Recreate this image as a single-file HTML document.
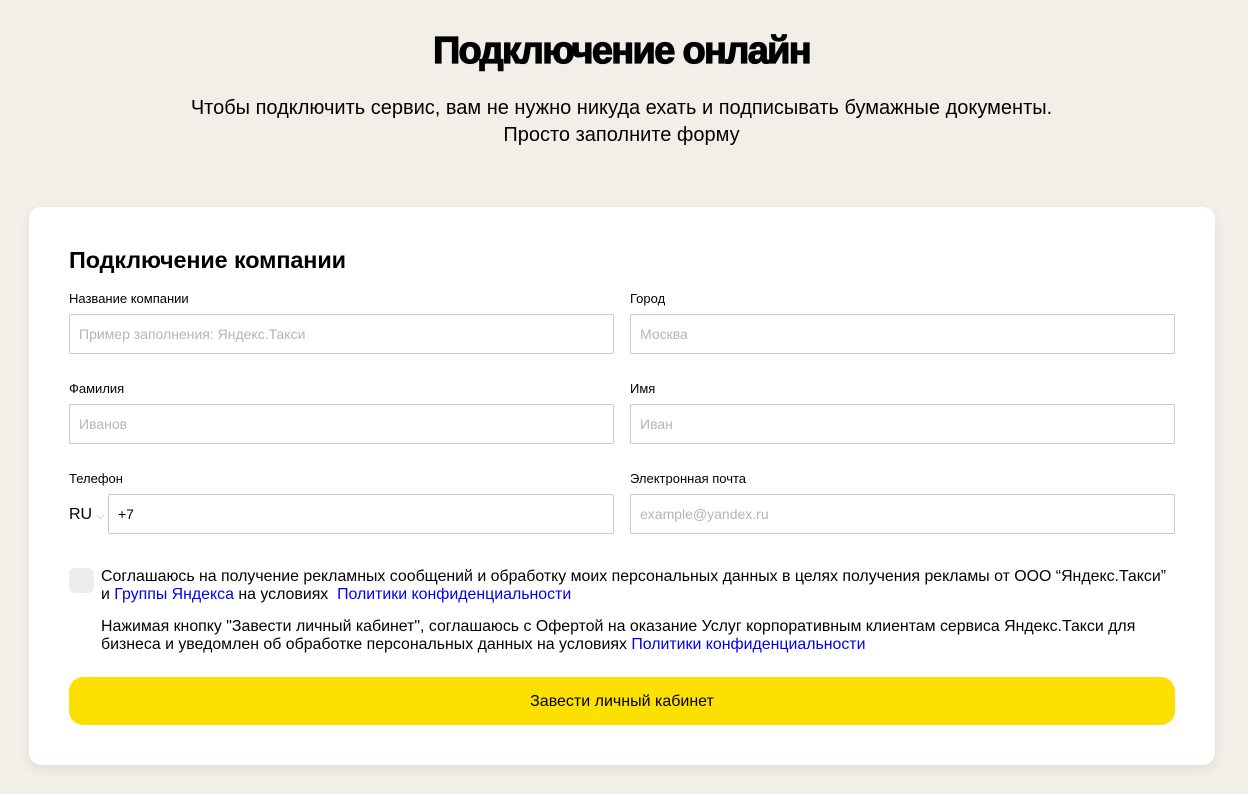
<!DOCTYPE html>
<html><head><meta charset="utf-8"><style>
*{box-sizing:border-box;margin:0;padding:0}
body{width:1248px;height:794px;background:#f2efe8;font-family:"Liberation Sans",sans-serif;color:#000;position:relative;overflow:hidden}
h1{position:absolute;top:30px;left:0;width:1243px;text-align:center;font-size:38px;font-weight:bold;letter-spacing:-1.7px;-webkit-text-stroke:1.2px #000}
.sub{position:absolute;top:95px;left:0;width:1243px;text-align:center;font-size:20px;line-height:27px}
.card{position:absolute;left:29px;top:207px;width:1186px;height:558px;background:#fff;border-radius:12px;box-shadow:0 4px 12px rgba(0,0,0,.08)}
.t{position:absolute;left:40px;top:40px;font-size:23.4px;font-weight:bold;letter-spacing:-0.1px}
.l{position:absolute;font-size:13px}
.i{position:absolute;height:40px;width:545px;border:1px solid #c9c9c9;border-radius:2px;font-size:14px;color:#b5b5b5;padding:11px 9px}
.cb{position:absolute;left:40px;top:361px;width:25px;height:25px;background:#eeedeb;border-radius:6px}
.p{position:absolute;left:72px;font-size:15.9px;line-height:18px}
a{color:#0000ee;text-decoration:none}
.btn{position:absolute;left:40px;top:470px;width:1106px;height:48px;background:#fce000;border-radius:14px;text-align:center;line-height:50px;font-size:16px}
</style></head><body>
<h1>Подключение онлайн</h1>
<div class="sub">Чтобы подключить сервис, вам не нужно никуда ехать и подписывать бумажные документы.<br>Просто заполните форму</div>
<div class="card">
<div class="t">Подключение компании</div>
<div class="l" style="left:40px;top:84px">Название компании</div>
<div class="l" style="left:601px;top:84px">Город</div>
<div class="i" style="left:40px;top:107px">Пример заполнения: Яндекс.Такси</div>
<div class="i" style="left:601px;top:107px">Москва</div>
<div class="l" style="left:40px;top:174px">Фамилия</div>
<div class="l" style="left:601px;top:174px">Имя</div>
<div class="i" style="left:40px;top:197px">Иванов</div>
<div class="i" style="left:601px;top:197px">Иван</div>
<div class="l" style="left:40px;top:264px">Телефон</div>
<div class="l" style="left:601px;top:264px">Электронная почта</div>
<div style="position:absolute;left:40px;top:299px;font-size:16px">RU <span style="font-size:10px;color:#aaa">⌵</span></div>
<div class="i" style="left:79px;top:287px;width:506px;color:#000">+7</div>
<div class="i" style="left:601px;top:287px">example@yandex.ru</div>
<div class="cb"></div>
<div class="p" style="top:361px;width:1100px">Соглашаюсь на получение рекламных сообщений и обработку моих персональных данных в целях получения рекламы от ООО “Яндекс.Такси”<br>и <a>Группы Яндекса</a> на условиях&nbsp; <a>Политики конфиденциальности</a></div>
<div class="p" style="top:411px;width:1100px">Нажимая кнопку "Завести личный кабинет", соглашаюсь с Офертой на оказание Услуг корпоративным клиентам сервиса Яндекс.Такси для<br>бизнеса и уведомлен об обработке персональных данных на условиях <a>Политики конфиденциальности</a></div>
<div class="btn">Завести личный кабинет</div>
</div>
</body></html>
